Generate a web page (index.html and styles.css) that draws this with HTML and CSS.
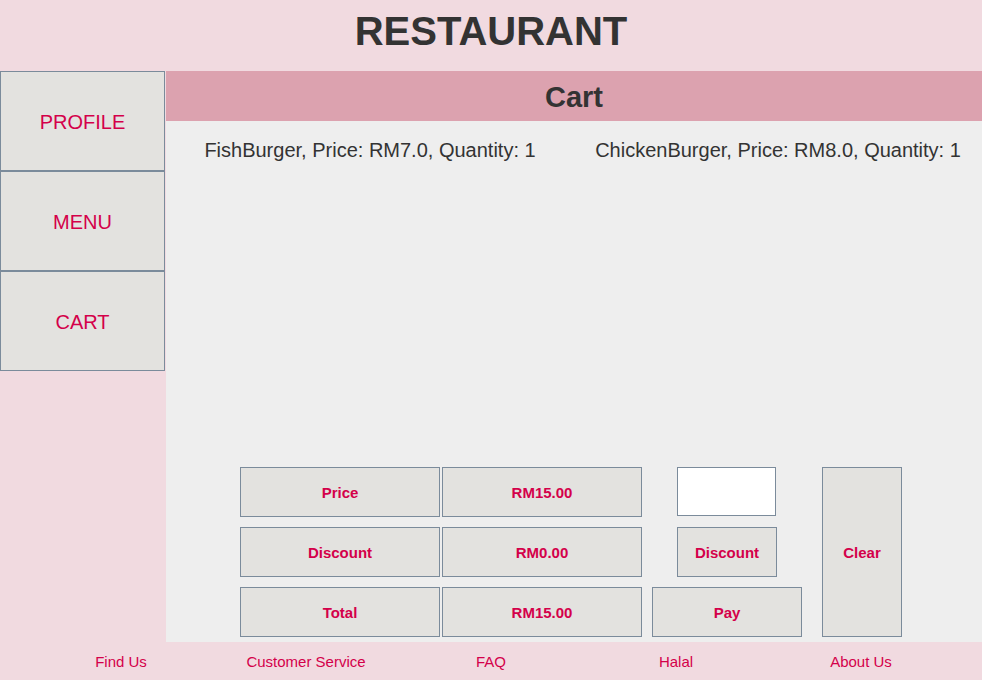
FILE: index.html
```html
<!DOCTYPE html>
<html>
<head>
<meta charset="utf-8">
<link rel="stylesheet" href="styles.css">
</head>
<body>
<div class="app">
  <header class="top">RESTAURANT</header>
  <div class="middle">
    <nav class="side">
      <button class="nav-btn">PROFILE</button>
      <button class="nav-btn">MENU</button>
      <button class="nav-btn">CART</button>
    </nav>
    <main class="main">
      <div class="cart-title">Cart</div>
      <div class="cart-body">
        <div class="items">
          <div class="item">FishBurger, Price: RM7.0, Quantity: 1</div>
          <div class="item">ChickenBurger, Price: RM8.0, Quantity: 1</div>
        </div>
        <div class="summary">
          <div class="totals">
            <div class="box">Price</div>
            <div class="box">RM15.00</div>
            <div class="box">Discount</div>
            <div class="box">RM0.00</div>
            <div class="box">Total</div>
            <div class="box">RM15.00</div>
          </div>
          <div class="actions">
            <input class="code" type="text">
            <button class="box disc">Discount</button>
            <button class="box pay">Pay</button>
          </div>
          <button class="box clear">Clear</button>
        </div>
      </div>
    </main>
  </div>
  <footer class="foot">
    <a>Find Us</a>
    <a>Customer Service</a>
    <a>FAQ</a>
    <a>Halal</a>
    <a>About Us</a>
  </footer>
</div>
</body>
</html>
```
FILE: styles.css
```css
* { box-sizing: border-box; }
html, body { margin: 0; padding: 0; }
body {
  width: 982px;
  height: 680px;
  background: #f1dae0;
  font-family: "Liberation Sans", Arial, sans-serif;
  overflow: hidden;
}
.app {
  display: flex;
  flex-direction: column;
  height: 680px;
}
.top {
  height: 71px;
  display: flex;
  align-items: center;
  justify-content: center;
  font-size: 40px;
  font-weight: bold;
  color: #333333;
  padding-bottom: 9px;
}
.middle {
  display: flex;
  height: 571px;
}
.side {
  width: 166px;
  display: flex;
  flex-direction: column;
}
.nav-btn {
  width: 165px;
  height: 100px;
  background: #e3e2df;
  border: 1px solid #7b8b9b;
  color: #d4004a;
  font-family: "Liberation Sans", Arial, sans-serif;
  font-size: 20px;
  padding: 2px 0 0;
  margin: 0;
}
.main {
  flex: 1;
  display: flex;
  flex-direction: column;
  background: #eeeeee;
}
.cart-title {
  height: 50px;
  background: #dca2af;
  color: #333333;
  font-size: 29px;
  font-weight: bold;
  display: flex;
  align-items: center;
  justify-content: center;
  padding-top: 2px;
}
.cart-body {
  flex: 1;
  display: flex;
  flex-direction: column;
  justify-content: space-between;
  padding-bottom: 5px;
}
.items {
  display: grid;
  grid-template-columns: 1fr 1fr;
  padding-top: 18px;
}
.item {
  text-align: center;
  font-size: 20px;
  color: #333333;
}
.summary {
  display: flex;
  align-items: flex-start;
  padding-left: 74px;
}
.box {
  background: #e3e2df;
  border: 1px solid #7b8b9b;
  color: #d4004a;
  font-family: "Liberation Sans", Arial, sans-serif;
  font-size: 15px;
  font-weight: bold;
  display: flex;
  align-items: center;
  justify-content: center;
  padding: 0;
  margin: 0;
}
.totals {
  display: grid;
  grid-template-columns: 200px 200px;
  grid-auto-rows: 50px;
  column-gap: 2px;
  row-gap: 10px;
}
.actions {
  width: 150px;
  margin-left: 10px;
  display: flex;
  flex-direction: column;
  align-items: center;
  gap: 10px;
}
.code {
  width: 99px;
  height: 49px;
  margin: 0 1px 1px 0;
  background: #ffffff;
  border: 1px solid #7b8b9b;
  padding: 0;
}
.disc {
  width: 100px;
  height: 50px;
}
.pay {
  width: 150px;
  height: 50px;
}
.clear {
  width: 80px;
  height: 170px;
  margin-left: 20px;
}
.foot {
  height: 38px;
  display: grid;
  grid-template-columns: repeat(5, 185px);
  justify-content: center;
  align-items: center;
}
.foot a {
  text-align: center;
  font-size: 15px;
  color: #d4004a;
}
```
